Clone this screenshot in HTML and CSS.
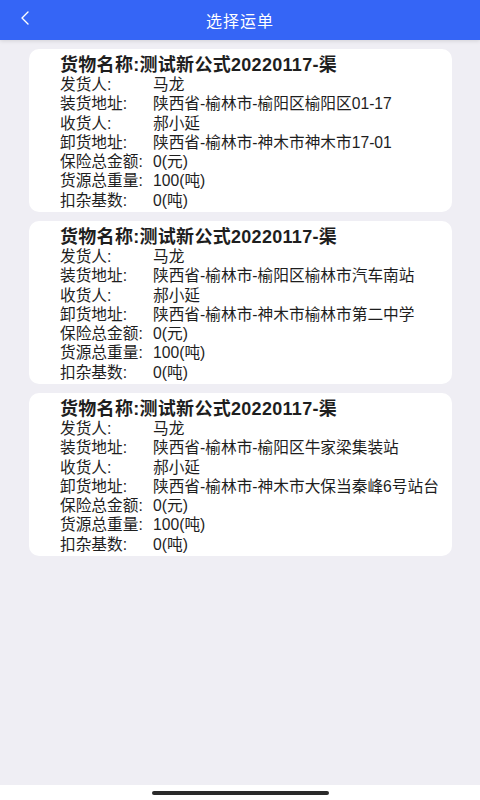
FILE: index.html
```html
<!DOCTYPE html>
<html lang="zh-CN">
<head>
<meta charset="utf-8">
<title>选择运单</title>
<link rel="stylesheet" href="styles.css">
</head>
<body>
<div class="screen">
  <header class="topbar">
    <span class="back">
      <svg width="12" height="14" viewBox="0 0 12 14"><path d="M9 1 L3 7 L9 13" fill="none" stroke="#fff" stroke-width="1.4" stroke-linecap="round" stroke-linejoin="round"/></svg>
    </span>
    <h1 class="title">选择运单</h1>
  </header>
  <main class="list">
    <section class="card">
      <div class="card-title">货物名称:测试新公式20220117-渠</div>
      <div class="row"><span class="label">发货人:</span><span class="value">马龙</span></div>
      <div class="row"><span class="label">装货地址:</span><span class="value">陕西省-榆林市-榆阳区榆阳区01-17</span></div>
      <div class="row"><span class="label">收货人:</span><span class="value">郝小延</span></div>
      <div class="row"><span class="label">卸货地址:</span><span class="value">陕西省-榆林市-神木市神木市17-01</span></div>
      <div class="row"><span class="label">保险总金额:</span><span class="value">0(元)</span></div>
      <div class="row"><span class="label">货源总重量:</span><span class="value">100(吨)</span></div>
      <div class="row"><span class="label">扣杂基数:</span><span class="value">0(吨)</span></div>
    </section>
    <section class="card">
      <div class="card-title">货物名称:测试新公式20220117-渠</div>
      <div class="row"><span class="label">发货人:</span><span class="value">马龙</span></div>
      <div class="row"><span class="label">装货地址:</span><span class="value">陕西省-榆林市-榆阳区榆林市汽车南站</span></div>
      <div class="row"><span class="label">收货人:</span><span class="value">郝小延</span></div>
      <div class="row"><span class="label">卸货地址:</span><span class="value">陕西省-榆林市-神木市榆林市第二中学</span></div>
      <div class="row"><span class="label">保险总金额:</span><span class="value">0(元)</span></div>
      <div class="row"><span class="label">货源总重量:</span><span class="value">100(吨)</span></div>
      <div class="row"><span class="label">扣杂基数:</span><span class="value">0(吨)</span></div>
    </section>
    <section class="card">
      <div class="card-title">货物名称:测试新公式20220117-渠</div>
      <div class="row"><span class="label">发货人:</span><span class="value">马龙</span></div>
      <div class="row"><span class="label">装货地址:</span><span class="value">陕西省-榆林市-榆阳区牛家梁集装站</span></div>
      <div class="row"><span class="label">收货人:</span><span class="value">郝小延</span></div>
      <div class="row"><span class="label">卸货地址:</span><span class="value">陕西省-榆林市-神木市大保当秦峰6号站台</span></div>
      <div class="row"><span class="label">保险总金额:</span><span class="value">0(元)</span></div>
      <div class="row"><span class="label">货源总重量:</span><span class="value">100(吨)</span></div>
      <div class="row"><span class="label">扣杂基数:</span><span class="value">0(吨)</span></div>
    </section>
  </main>
  <footer class="home-area"><span class="home-bar"></span></footer>
</div>
</body>
</html>
```
FILE: styles.css
```css
* { box-sizing: border-box; }
html, body { margin: 0; padding: 0; }
body {
  font-family: "Liberation Sans", "Noto Sans CJK SC", sans-serif;
  background: #efeef4;
  color: #1e1e1e;
}
.screen {
  width: 480px;
  height: 800px;
  display: flex;
  flex-direction: column;
  overflow: hidden;
}
.topbar {
  height: 40px;
  flex: none;
  background: #3565f6;
  display: flex;
  align-items: center;
  justify-content: center;
  position: relative;
  box-shadow: 0 1px 4px rgba(0,0,0,0.12);
}
.back {
  position: absolute;
  left: 19px;
  top: 11px;
  display: flex;
}
.title {
  margin: 0;
  font-family: "Noto Sans CJK SC", sans-serif;
  font-size: 16px;
  font-weight: 400;
  color: #fff;
  letter-spacing: 1px;
  line-height: 40px;
}
.list {
  flex: 1;
  padding: 9px 28px 0 29px;
  display: flex;
  flex-direction: column;
  gap: 9px;
}
.card {
  background: #fff;
  border-radius: 10px;
  padding: 6px 4px 0 31px;
  height: 163px;
  overflow: hidden;
}
.card-title {
  font-size: 18px;
  font-weight: 700;
  letter-spacing: 0.3px;
  line-height: 20px;
  white-space: nowrap;
}
.row {
  display: flex;
  font-size: 15.7px;
  line-height: 19.3px;
  white-space: nowrap;
}
.label {
  min-width: 93px;
  padding-right: 6px;
  flex: none;
}
.home-area {
  height: 15px;
  flex: none;
  background: #fff;
  display: flex;
  justify-content: center;
  align-items: flex-start;
  padding-top: 6px;
}
.home-bar {
  width: 177px;
  height: 4px;
  border-radius: 2px;
  background: #2a2a2a;
}
```
